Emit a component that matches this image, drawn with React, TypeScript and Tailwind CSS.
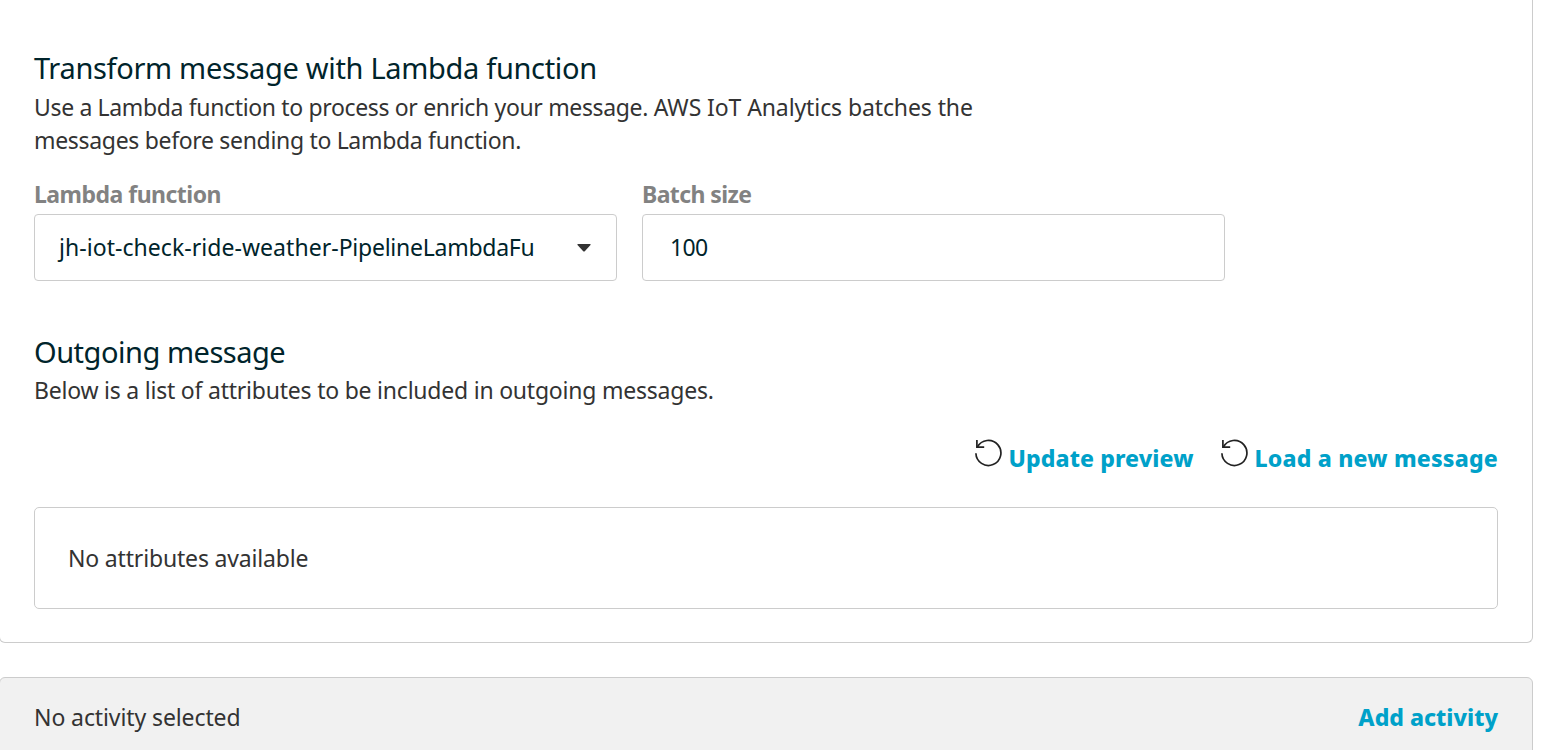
import type { ReactNode } from 'react';

function ReloadIcon() {
  return (
    <svg className="-mt-[10px] h-7 w-7 shrink-0" viewBox="0 0 28 28" fill="none" stroke="#222" strokeWidth="1.7">
      <path d="M1.9 14.3A12.5 12.5 0 1 0 3.4 8" />
      <path d="M2.9 0.9V8.2H10.2" />
    </svg>
  );
}

function Action({ label, tracking }: { label: string; tracking: string }) {
  return (
    <button className="flex h-8 items-center gap-[7px] whitespace-nowrap font-extrabold text-[#00a1c9]">
      <ReloadIcon />
      <span className={tracking}>{label}</span>
    </button>
  );
}

function Field({ label, tracking, children }: { label: string; tracking: string; children: ReactNode }) {
  return (
    <div className="w-[583px]">
      <div className="h-[33px] font-bold text-[#828282]">
        <span className={tracking}>{label}</span>
      </div>
      <div className="mt-[3px] flex h-[67px] items-center justify-between rounded-[4px] border border-[#ccc] text-[#00242b]">
        {children}
      </div>
    </div>
  );
}

export default function App() {
  return (
    <main className="h-[750px] w-full overflow-hidden whitespace-nowrap bg-white font-['Noto_Sans',sans-serif] text-[23px] leading-[33px] text-[#333]">
      <section className="-ml-px h-[643px] w-[1534px] rounded-b-[6px] border border-t-0 border-[#ccc] pl-[34px] pr-[34px] pt-[48px]">
        <h2 className="h-[43px] text-[29px] leading-[40px] text-[#00242b]">
          <span className="tracking-[-0.32px]">Transform message with Lambda function</span>
        </h2>
        <p>
          <span className="tracking-[-0.35px]">Use a Lambda function to process or enrich your message. </span>
          <span className="tracking-[-0.1px]">AWS IoT Analytics batches the</span>
          <br />
          <span className="tracking-[-0.32px]">messages before sending to Lambda function.</span>
        </p>
        <div className="mt-[21px] flex gap-[25px]">
          <Field label="Lambda function" tracking="tracking-[-0.52px]">
            <span className="ml-6 tracking-[0.05px]">
              jh-iot-check-ride-weather-<span className="tracking-[-0.25px]">PipelineLambdaFu</span>
            </span>
            <svg className="mr-[25px] h-2 w-[14px]" viewBox="0 0 14 8" fill="#333">
              <path d="M1 0H13Q14 0 13.5 1L8 7Q7 8 6 7L.5 1Q0 0 1 0Z" />
            </svg>
          </Field>
          <Field label="Batch size" tracking="tracking-[-0.6px]">
            <span className="ml-[27px] tracking-[-0.6px]">100</span>
          </Field>
        </div>
        <h2 className="mt-[51px] h-[42px] text-[29px] leading-[40px] text-[#00242b]">
          <span className="tracking-[-0.48px]">Outgoing message</span>
        </h2>
        <p>
          <span className="tracking-[-0.22px]">Below is a list of attributes to be included in outgoing messages.</span>
        </p>
        <div className="mt-[35px] flex justify-end gap-[26px]">
          <Action label="Update preview" tracking="tracking-[0.1px]" />
          <Action label="Load a new message" tracking="tracking-[0.2px]" />
        </div>
        <div className="mt-[33px] flex h-[102px] items-center rounded-[5px] border border-[#ccc] pl-[33px]">
          <span className="tracking-[-0.17px]">No attributes available</span>
        </div>
      </section>
      <section className="-ml-px mt-[34px] flex h-[90px] w-[1534px] justify-between rounded-t-[6px] border border-[#ccc] bg-[#f1f1f1] px-[34px] pt-[23px]">
        <span className="tracking-[-0.1px]">No activity selected</span>
        <button className="h-[33px] font-extrabold text-[#00a1c9]">
          <span>Add activity</span>
        </button>
      </section>
    </main>
  );
}
